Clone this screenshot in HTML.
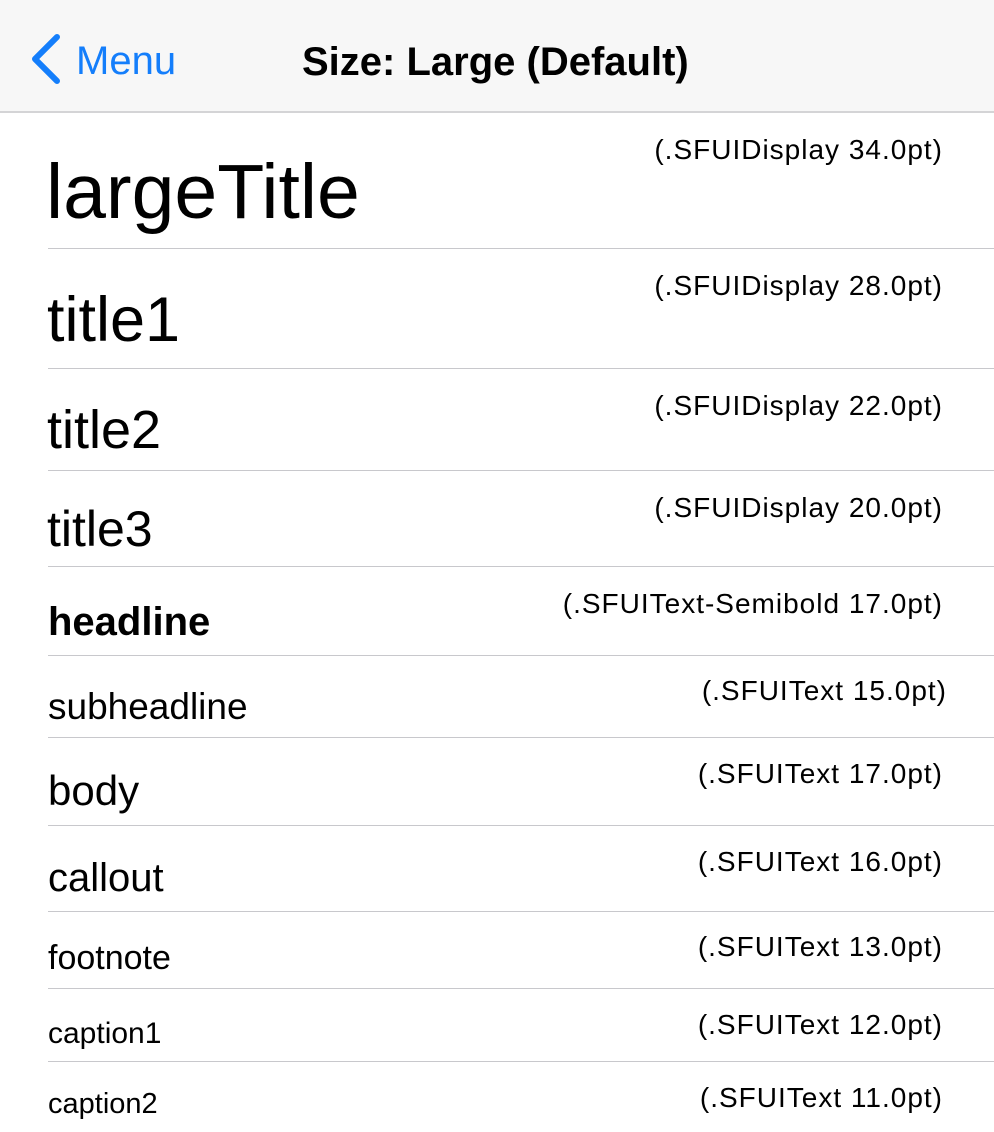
<!DOCTYPE html>
<html><head><meta charset="utf-8"><style>
body{margin:0;width:994px;height:1132px;background:#fff;position:relative;overflow:hidden;font-family:"Liberation Sans",sans-serif;color:#000}
.nav{position:absolute;left:0;top:0;width:994px;height:111px;background:#f7f7f7;border-bottom:2px solid #d4d4d6}
.t{position:absolute;line-height:1;white-space:nowrap}
.r{position:absolute;right:51px;line-height:1;white-space:nowrap;font-size:28px;letter-spacing:1px;text-align:right}
.sep{position:absolute;left:48px;right:0;height:1px;background:#c8c8cc}
</style></head><body>
<div class="nav"></div>
<svg style="position:absolute;left:0;top:0" width="80" height="100"><path d="M57 37 L35 59 L57 81" fill="none" stroke="#147efb" stroke-width="6" stroke-linecap="round" stroke-linejoin="round"/></svg>
<div class="t" style="left:76px;top:41px;font-size:40px;color:#147efb">Menu</div>
<div class="t" style="left:302px;top:42px;font-size:40px;font-weight:bold">Size: Large (Default)</div>

<div class="t" style="left:46px;top:154px;font-size:77px">largeTitle</div>
<div class="r" style="top:136px">(.SFUIDisplay 34.0pt)</div>
<div class="sep" style="top:248px"></div>
<div class="t" style="left:47px;top:289px;font-size:63px">title1</div>
<div class="r" style="top:272px">(.SFUIDisplay 28.0pt)</div>
<div class="sep" style="top:368px"></div>
<div class="t" style="left:47px;top:403px;font-size:54px">title2</div>
<div class="r" style="top:392px">(.SFUIDisplay 22.0pt)</div>
<div class="sep" style="top:470px"></div>
<div class="t" style="left:47px;top:504px;font-size:50px">title3</div>
<div class="r" style="top:494px">(.SFUIDisplay 20.0pt)</div>
<div class="sep" style="top:566px"></div>
<div class="t" style="left:48px;top:602px;font-size:40px;font-weight:bold">headline</div>
<div class="r" style="top:590px">(.SFUIText-Semibold 17.0pt)</div>
<div class="sep" style="top:655px"></div>
<div class="t" style="left:48px;top:688px;font-size:37px">subheadline</div>
<div class="r" style="top:677px;right:47px">(.SFUIText 15.0pt)</div>
<div class="sep" style="top:737px"></div>
<div class="t" style="left:48px;top:770px;font-size:42px">body</div>
<div class="r" style="top:760px">(.SFUIText 17.0pt)</div>
<div class="sep" style="top:825px"></div>
<div class="t" style="left:48px;top:858px;font-size:40px">callout</div>
<div class="r" style="top:848px">(.SFUIText 16.0pt)</div>
<div class="sep" style="top:911px"></div>
<div class="t" style="left:48px;top:941px;font-size:34px">footnote</div>
<div class="r" style="top:933px">(.SFUIText 13.0pt)</div>
<div class="sep" style="top:988px"></div>
<div class="t" style="left:48px;top:1019px;font-size:30px">caption1</div>
<div class="r" style="top:1011px">(.SFUIText 12.0pt)</div>
<div class="sep" style="top:1061px"></div>
<div class="t" style="left:48px;top:1090px;font-size:29px">caption2</div>
<div class="r" style="top:1084px">(.SFUIText 11.0pt)</div>
</body></html>
